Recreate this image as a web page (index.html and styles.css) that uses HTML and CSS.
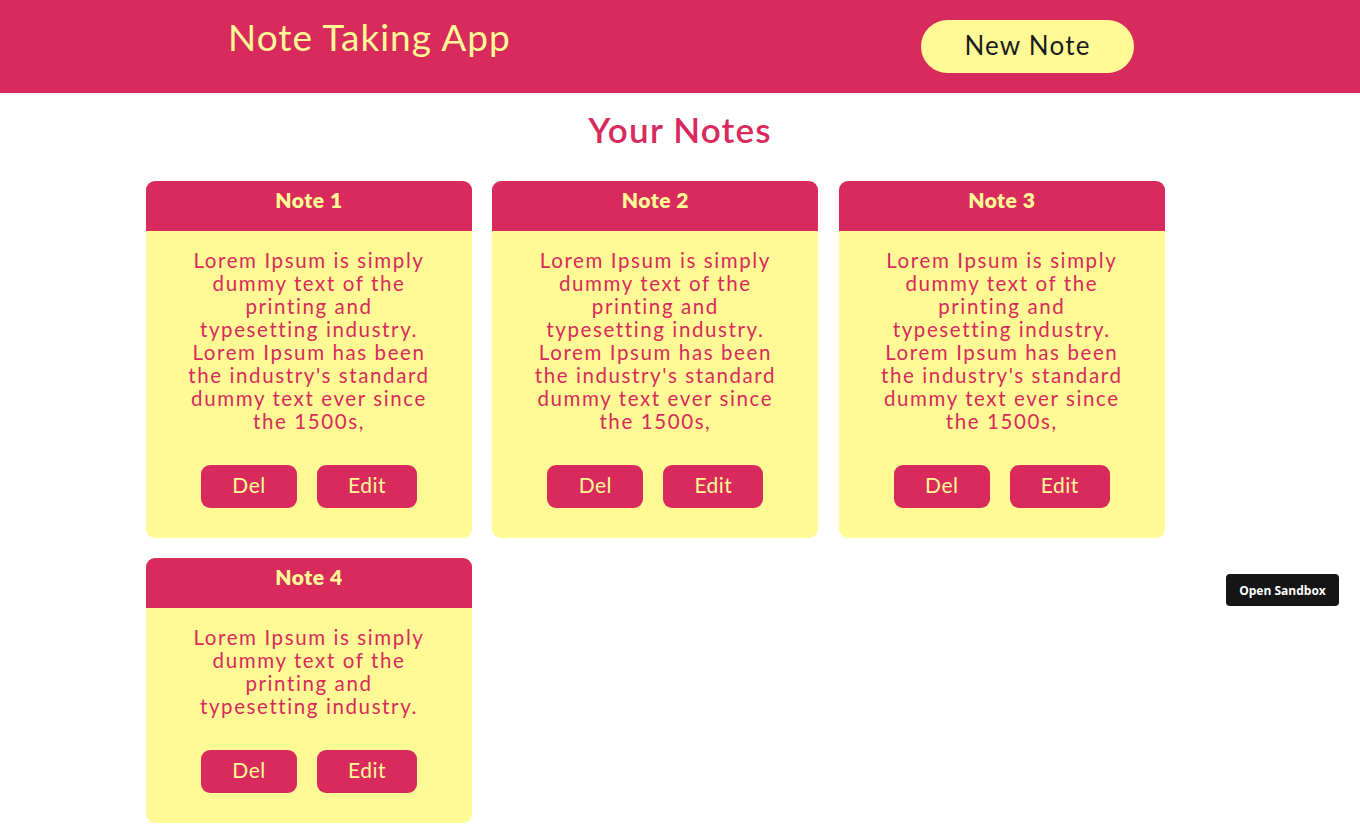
FILE: index.html
```html
<!DOCTYPE html>
<html lang="en">
<head>
<meta charset="utf-8">
<title>Note Taking App</title>
<link rel="stylesheet" href="styles.css">
</head>
<body>
<header class="topbar">
  <h1 class="brand">Note Taking App</h1>
  <button class="new-note">New Note</button>
</header>
<main class="content">
  <h2 class="section-title">Your Notes</h2>
  <div class="notes">
    <article class="note">
      <div class="note-head">Note 1</div>
      <div class="note-body">
        <p class="note-text">Lorem Ipsum is simply<br>dummy text of the<br>printing and<br>typesetting industry.<br>Lorem Ipsum has been<br>the industry's standard<br>dummy text ever since<br>the 1500s,</p>
        <div class="note-actions"><button class="btn btn-del">Del</button><button class="btn btn-edit">Edit</button></div>
      </div>
    </article>
    <article class="note">
      <div class="note-head">Note 2</div>
      <div class="note-body">
        <p class="note-text">Lorem Ipsum is simply<br>dummy text of the<br>printing and<br>typesetting industry.<br>Lorem Ipsum has been<br>the industry's standard<br>dummy text ever since<br>the 1500s,</p>
        <div class="note-actions"><button class="btn btn-del">Del</button><button class="btn btn-edit">Edit</button></div>
      </div>
    </article>
    <article class="note">
      <div class="note-head">Note 3</div>
      <div class="note-body">
        <p class="note-text">Lorem Ipsum is simply<br>dummy text of the<br>printing and<br>typesetting industry.<br>Lorem Ipsum has been<br>the industry's standard<br>dummy text ever since<br>the 1500s,</p>
        <div class="note-actions"><button class="btn btn-del">Del</button><button class="btn btn-edit">Edit</button></div>
      </div>
    </article>
    <article class="note">
      <div class="note-head">Note 4</div>
      <div class="note-body">
        <p class="note-text">Lorem Ipsum is simply<br>dummy text of the<br>printing and<br>typesetting industry.</p>
        <div class="note-actions"><button class="btn btn-del">Del</button><button class="btn btn-edit">Edit</button></div>
      </div>
    </article>
  </div>
</main>
<a class="sandbox" href="#">Open Sandbox</a>
</body>
</html>
```

FILE: styles.css
```css
* { box-sizing: border-box; }
html, body { margin: 0; padding: 0; }
body {
  background: #ffffff;
  font-family: "Lato", "Noto Sans", sans-serif;
  color: #d82a5c;
}
.topbar {
  height: 93px;
  background: #d82a5c;
  display: grid;
  grid-template-columns: 693px 213px;
  align-items: start;
  padding-left: 228px;
}
.brand {
  margin: 17px 0 0 0;
  font-weight: 400;
  font-size: 37px;
  letter-spacing: 1px;
  color: #fffa96;
  line-height: 40px;
}
.new-note {
  margin-top: 20px;
  width: 213px;
  height: 53px;
  border: none;
  border-radius: 27px;
  background: #fffa96;
  color: #1a1a1a;
  font-family: inherit;
  font-size: 26px;
  letter-spacing: 1.2px;
  padding: 0 0 4px 0;
}
.content { padding: 0 0 14px 146px; }
.section-title {
  margin: 0;
  padding: 16px 146px 0 0;
  text-align: center;
  font-size: 35px;
  font-weight: 600;
  letter-spacing: 1.2px;
  line-height: 40px;
  color: #d82a5c;
  height: 88px;
}
.notes {
  display: grid;
  grid-template-columns: repeat(3, 326px);
  column-gap: 20.4px;
  row-gap: 20px;
  align-items: start;
}
.note {
  border-radius: 9px;
  overflow: hidden;
  background: #fffa96;
}
.note-head {
  height: 50px;
  background: #d82a5c;
  color: #fffa96;
  text-align: center;
  font-weight: 800;
  font-size: 21px;
  letter-spacing: 0.5px;
  padding-top: 6px;
}
.note-body {
  padding: 18px 0 30px;
  display: flex;
  flex-direction: column;
  align-items: center;
}
.note-text {
  margin: 0;
  text-align: center;
  font-size: 20.5px;
  line-height: 23px;
  letter-spacing: 1.6px;
  color: #d82a5c;
}
.note-actions {
  display: flex;
  gap: 20px;
  margin-top: 32px;
}
.btn {
  height: 43px;
  border: none;
  border-radius: 9px;
  background: #d82a5c;
  color: #fffa96;
  font-family: inherit;
  font-size: 21px;
  letter-spacing: 0.5px;
  padding: 0 0 4px 0;
}
.btn-del { width: 96px; }
.btn-edit { width: 100px; }
.sandbox {
  position: fixed;
  left: 1226px;
  top: 574px;
  width: 113px;
  height: 32px;
  background: #151515;
  color: #ffffff;
  border-radius: 4px;
  font-family: "Open Sans", "Noto Sans", sans-serif;
  font-weight: 700;
  font-size: 12px;
  text-decoration: none;
  display: flex;
  align-items: center;
  justify-content: center;
}
```
